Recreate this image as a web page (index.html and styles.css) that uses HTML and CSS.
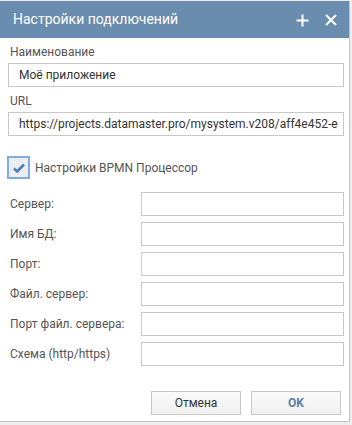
FILE: index.html
```html
<!DOCTYPE html>
<html lang="ru">
<head>
<meta charset="utf-8">
<title>Настройки подключений</title>
<link rel="stylesheet" href="styles.css">
</head>
<body>
<div class="dialog">
  <div class="header">
    <span class="title">Настройки подключений</span>
    <span class="tools">
      <svg class="icon" width="13" height="13" viewBox="0 0 13 13"><path d="M6.5 0.5v12M0.5 6.5h12" stroke="#fff" stroke-width="2" fill="none"/></svg>
      <svg class="icon" width="12" height="12" viewBox="0 0 12 12"><path d="M1 1l10 10M11 1L1 11" stroke="#fff" stroke-width="2" fill="none"/></svg>
    </span>
  </div>
  <div class="body">
    <div class="field">
      <div class="label">Наименование</div>
      <div class="input">Моё приложение</div>
    </div>
    <div class="field">
      <div class="label">URL</div>
      <div class="input">https://projects.datamaster.pro/mysystem.v208/aff4e452-e</div>
    </div>
    <div class="check">
      <span class="box"><svg width="14" height="12" viewBox="0 0 14 12"><path d="M2 6.5l3.2 3L12 2.5" stroke="#4a80bd" stroke-width="2.6" fill="none"/></svg></span>
      <span class="check-label">Настройки BPMN Процессор</span>
    </div>
    <div class="rows">
      <div class="row"><span class="row-label">Сервер:</span><span class="row-input"></span></div>
      <div class="row"><span class="row-label">Имя БД:</span><span class="row-input"></span></div>
      <div class="row"><span class="row-label">Порт:</span><span class="row-input"></span></div>
      <div class="row"><span class="row-label">Файл. сервер:</span><span class="row-input"></span></div>
      <div class="row"><span class="row-label">Порт файл. сервера:</span><span class="row-input"></span></div>
      <div class="row"><span class="row-label">Схема (http/https)</span><span class="row-input"></span></div>
    </div>
  </div>
  <div class="footer">
    <button class="btn">Отмена</button>
    <button class="btn btn-ok">OK</button>
  </div>
</div>
</body>
</html>
```
FILE: styles.css
```css
html, body {
  margin: 0;
  padding: 0;
  background: #eeeeee;
}
body {
  font-family: Roboto, "Open Sans", sans-serif;
  font-size: 12px;
  color: #555;
}
.dialog {
  box-sizing: border-box;
  width: 350px;
  height: 421px;
  margin-top: 1px;
  background: #fff;
  border-right: 1px solid #c4c4c4;
  border-bottom: 1px solid #c4c4c4;
  display: flex;
  flex-direction: column;
}
.header {
  height: 37px;
  flex: none;
  background: #6a8cae;
  color: #fff;
  display: flex;
  align-items: center;
  justify-content: space-between;
  padding: 0 12px 0 13px;
}
.title {
  font-size: 14px;
  margin-top: -1px;
}
.tools {
  display: flex;
  align-items: center;
  gap: 16px;
  margin-top: 1px;
}
.icon {
  display: block;
}
.body {
  flex: 1;
  display: flex;
  flex-direction: column;
  padding: 6px 5px 0 8px;
}
.field {
  margin-bottom: 6px;
}
.label {
  height: 17px;
  line-height: 17px;
  margin-bottom: 2px;
  padding-left: 2px;
  color: #555;
}
.input {
  box-sizing: border-box;
  height: 24px;
  line-height: 22px;
  border: 1px solid #c8c8c8;
  padding: 0 10px;
  color: #333;
  white-space: nowrap;
  overflow: hidden;
}
.check {
  display: flex;
  align-items: center;
  gap: 5px;
  margin-top: 14px;
  margin-left: -1px;
}
.box {
  box-sizing: border-box;
  width: 23px;
  height: 23px;
  border: 2px solid #80acdf;
  background: #eceef1;
  display: flex;
  align-items: center;
  justify-content: center;
}
.check-label {
  color: #555;
}
.rows {
  display: flex;
  flex-direction: column;
  gap: 6px;
  margin-top: 13px;
}
.row {
  display: flex;
  align-items: center;
  justify-content: space-between;
}
.row-label {
  padding-left: 2px;
  color: #555;
}
.row-input {
  box-sizing: border-box;
  width: 203px;
  height: 24px;
  border: 1px solid #c8c8c8;
}
.footer {
  flex: none;
  display: flex;
  justify-content: flex-end;
  gap: 10px;
  padding: 0 8px 6px 0;
}
.btn {
  box-sizing: border-box;
  width: 90px;
  height: 24px;
  border: 1px solid #c8c8c8;
  background: linear-gradient(#fafafa, #f0f0f0);
  font-family: Roboto, "Open Sans", sans-serif;
  font-size: 12px;
  color: #333;
  padding: 0;
}
.btn-ok {
  color: #5b7ea3;
  font-weight: bold;
}
```
